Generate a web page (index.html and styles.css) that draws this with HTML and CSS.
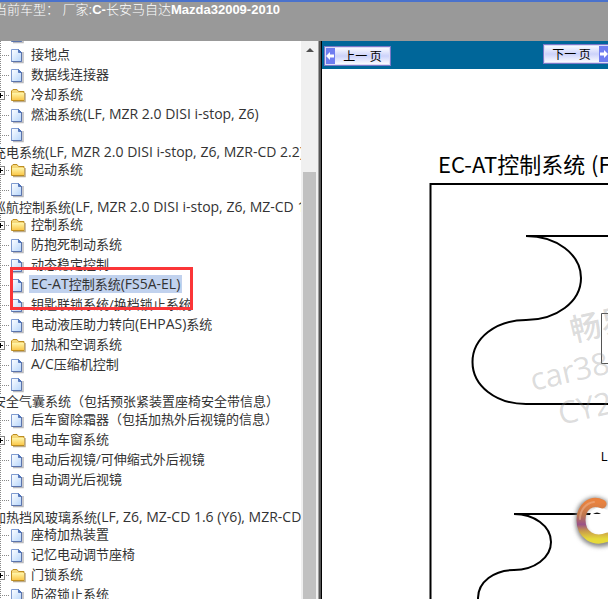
FILE: index.html
```
<!DOCTYPE html>
<html lang="zh-CN">
  <head>
    <meta charset="UTF-8" />
    <meta name="viewport" content="width=device-width, initial-scale=1.0" />
    <title>EC-AT控制系统</title>
    <link rel="stylesheet" href="styles.css">
  </head>
  <body>
    <svg class="defs" width="0" height="0" aria-hidden="true">
      <defs>
        <linearGradient id="paper" x1="0" y1="0" x2="1" y2="1">
          <stop offset="0" stop-color="#ffffff" />
          <stop offset="1" stop-color="#b5d5fb" />
        </linearGradient>
        <linearGradient id="gold" x1="0" y1="0" x2="0" y2="1">
          <stop offset="0" stop-color="#fff5a8" />
          <stop offset="1" stop-color="#fbc84b" />
        </linearGradient>
        <symbol id="page" viewBox="0 0 16 18">
          <path d="M3 16.5h10V6" fill="none" stroke="#b9b9bd" stroke-width="1.5" />
          <path d="M1.5 3.5h7l3 3v9h-10z" fill="url(#paper)" stroke="#7f9bd0" />
          <path d="M8.500 3.500v3h3z" fill="#5578bd" stroke="#5578bd" />
          <path d="M11.500 6v9.500H1.500" fill="none" stroke="#5b74ad" />
        </symbol>
        <symbol id="folder" viewBox="0 0 16 18">
          <path d="M3 15.500h12V7" fill="none" stroke="#b9a98a" stroke-width="1.500" />
          <path d="M1.500 14.500v-9.500l1.500-1.500h4l1.500 2h5.500v9z" fill="#f5d87a" stroke="#bd8d20" />
          <path d="M2 7h12v7H2z" fill="url(#gold)" />
        </symbol>
      </defs>
    </svg>

    <header class="header">
      <h1>当前车型： 厂家:<b>C-</b>长安马自达<b>Mazda32009-2010</b></h1>
    </header>

    <div class="frames">
      <nav class="tree">
        <ul>
          <li><svg class="icon"><use href="#page" /></svg></li>
          <li><svg class="icon"><use href="#page" /></svg><a href="#">接地点</a></li>
          <li><svg class="icon"><use href="#page" /></svg><a href="#">数据线连接器</a></li>
          <li class="parent"><button class="plus" aria-label="展开"></button><svg class="icon"><use href="#folder" /></svg><a href="#">冷却系统</a></li>
          <li><svg class="icon"><use href="#page" /></svg><a href="#">燃油系统<span class="en">(LF, MZR 2.0 DISI i-stop, Z6)</span></a></li>
          <li class="wrapped"><svg class="icon"><use href="#page" /></svg><a href="#">充电系统<span class="en">(LF, MZR 2.0 DISI i-stop, Z6, MZR-CD 2.2)</span></a></li>
          <li class="parent"><button class="plus" aria-label="展开"></button><svg class="icon"><use href="#folder" /></svg><a href="#">起动系统</a></li>
          <li class="wrapped"><svg class="icon"><use href="#page" /></svg><a href="#">巡航控制系统<span class="en">(LF, MZR 2.0 DISI i-stop, Z6, MZ-CD 1.6 (Y6))</span></a></li>
          <li class="parent"><button class="plus" aria-label="展开"></button><svg class="icon"><use href="#folder" /></svg><a href="#">控制系统</a></li>
          <li><svg class="icon"><use href="#page" /></svg><a href="#">防抱死制动系统</a></li>
          <li><svg class="icon"><use href="#page" /></svg><a href="#">动态稳定控制</a></li>
          <li class="marked"><svg class="icon"><use href="#page" /></svg><a href="#" class="selected"><span class="en">EC-AT</span>控制系统<span class="en">(FS5A-EL)</span></a></li>
          <li><svg class="icon"><use href="#page" /></svg><a href="#">钥匙联锁系统/换档锁止系统</a></li>
          <li><svg class="icon"><use href="#page" /></svg><a href="#">电动液压助力转向<span class="en">(EHPAS)</span>系统</a></li>
          <li class="parent"><button class="plus" aria-label="展开"></button><svg class="icon"><use href="#folder" /></svg><a href="#">加热和空调系统</a></li>
          <li><svg class="icon"><use href="#page" /></svg><a href="#"><span class="en">A/C</span>压缩机控制</a></li>
          <li class="wrapped"><svg class="icon"><use href="#page" /></svg><a href="#">安全气囊系统（包括预张紧装置座椅安全带信息）</a></li>
          <li><svg class="icon"><use href="#page" /></svg><a href="#">后车窗除霜器（包括加热外后视镜的信息）</a></li>
          <li class="parent"><button class="plus" aria-label="展开"></button><svg class="icon"><use href="#folder" /></svg><a href="#">电动车窗系统</a></li>
          <li><svg class="icon"><use href="#page" /></svg><a href="#">电动后视镜/可伸缩式外后视镜</a></li>
          <li><svg class="icon"><use href="#page" /></svg><a href="#">自动调光后视镜</a></li>
          <li class="wrapped"><svg class="icon"><use href="#page" /></svg><a href="#">加热挡风玻璃系统<span class="en">(LF, Z6, MZ-CD 1.6 (Y6), MZR-CD 2.2)</span></a></li>
          <li><svg class="icon"><use href="#page" /></svg><a href="#">座椅加热装置</a></li>
          <li><svg class="icon"><use href="#page" /></svg><a href="#">记忆电动调节座椅</a></li>
          <li class="parent"><button class="plus" aria-label="展开"></button><svg class="icon"><use href="#folder" /></svg><a href="#">门锁系统</a></li>
          <li><svg class="icon"><use href="#page" /></svg><a href="#">防盗锁止系统</a></li>
        </ul>
      </nav>

      <div class="scrollbar">
        <svg class="up" viewBox="0 0 8 4"><path d="M0 4l4-4 4 4z" fill="#505050" /></svg>
        <div class="thumb"></div>
      </div>

      <div class="divider"></div>

      <main class="content">
        <div class="toolbar">
          <button class="pager prev">
            <svg class="arrow" viewBox="0 0 10 18"><path d="M1 9l4-4v2.500h4v3H5V13z" fill="#fff" /></svg>
            <span>上一 页</span>
          </button>
          <button class="pager next">
            <span>下一 页</span>
            <svg class="arrow" viewBox="0 0 10 18"><path d="M9 9L5 5v2.500H1v3h4V13z" fill="#fff" /></svg>
          </button>
        </div>

        <svg class="diagram" width="600" height="600" viewBox="322 69 600 600">
          <defs>
            <linearGradient id="ring" x1="0" y1="0" x2="0" y2="1">
              <stop offset="0" stop-color="#e8823f" />
              <stop offset="0.350" stop-color="#bd7850" />
              <stop offset="0.600" stop-color="#9a5288" />
              <stop offset="0.780" stop-color="#c89a4c" />
              <stop offset="1" stop-color="#e6da3a" />
            </linearGradient>
            <filter id="soft" x="-30%" y="-30%" width="160%" height="160%">
              <feGaussianBlur stdDeviation="2" />
            </filter>
          </defs>
          <text class="title" x="438" y="173">EC-AT控制系统</text>
          <text class="title" x="591" y="173">(FS5A-EL)</text>
          <g class="lines">
            <path d="M922 184H430.500V700" />
            <path d="M526 236H922M526 236c30 0 55 18 55 42s-25 42-55 42c-30 0-53.500 18-53.500 42s23.500 42 53.500 42H922" />
            <path d="M514 514H922M514 514c20 0 37 12 37 28s-17 28-37 28c-20 0-36 12-36 28s16 28 36 28H922" />
          </g>
          <path d="M640 313.500H601.500V363.500H640" fill="none" stroke="#555" />
          <text class="note" x="601" y="461">L</text>
          <g class="watermark">
            <text transform="translate(573 342) rotate(-13)">畅易</text>
            <text transform="translate(533 391) rotate(-13)">car388</text>
            <text transform="translate(561 425) rotate(-13)">CY2</text>
          </g>
          <path d="M606 506c-12-9-26-3-26 14 0 20 16 26 30 20" fill="none" stroke="#888" stroke-width="9" filter="url(#soft)" />
          <path d="M601 507c-8 0-12 7-12 14 0 8 6 13 13 13h12v-20z" fill="#fff" />
          <path d="M602 504c-11-5-21 3-21 16 0 15 13 23 27 17" fill="none" stroke="url(#ring)" stroke-width="9" stroke-linecap="round" />
          <path d="M594 502c-8 1-14 8-14 17" fill="none" stroke="#efb795" stroke-width="2" stroke-linecap="round" opacity="0.500" />
          <path d="M593 514q4-3 8 0" fill="#111" />
        </svg>
      </main>
    </div>
  </body>
</html>
```
FILE: styles.css
```
* {
  box-sizing: border-box;
}

body {
  margin: 0;
  height: 100vh;
  display: flex;
  flex-direction: column;
  overflow: hidden;
  font-family: "Open Sans", "Noto Sans CJK SC", sans-serif;
  font-size: 13px;
  color: #333;
}

.defs {
  position: absolute;
}

.header {
  height: 41px;
  flex-shrink: 0;
  background: #999;
  border-top: 2px solid #4a72cc;
  overflow: hidden;
}

.header h1 {
  margin: 0 0 0 -6px;
  font-family: "Liberation Sans", "Noto Sans CJK SC", sans-serif;
  font-size: 13px;
  font-weight: 300;
  line-height: 15px;
  color: #fff;
  white-space: pre;
}

.header b {
  font-weight: 700;
}

.frames {
  flex: 1;
  display: flex;
  min-height: 0;
}

.tree {
  flex: 0 0 301px;
  overflow: hidden;
  background: #fff;
}

.tree ul {
  list-style: none;
  margin: -16px 0 0;
  padding: 0;
}

.tree li {
  display: flex;
  flex-wrap: wrap;
  align-items: center;
  height: 20px;
  padding-left: 10px;
  white-space: nowrap;
  background:
    repeating-linear-gradient(to bottom, #888 0 1px, transparent 1px 2px) 0 0 / 1px 20px no-repeat,
    repeating-linear-gradient(to right, #888 0 1px, transparent 1px 2px) 0 10px / 10px 1px no-repeat;
}

.tree li.parent {
  padding-left: 0;
}

.tree li.wrapped {
  height: 35px;
  align-content: flex-start;
}

.icon {
  width: 16px;
  height: 18px;
  margin: 1px 3px 1px 0;
  flex-shrink: 0;
}

.tree a {
  margin-bottom: 2px;
  padding: 0 2px;
  line-height: 18px;
  color: #333;
  text-decoration: none;
}

.tree .wrapped .icon {
  margin: 0 3px 1px 0;
}

.tree .wrapped a {
  flex: 0 0 120%;
  margin: 0 0 0 -19px;
  line-height: 15px;
}

.en {
  font-size: 14px;
}

.tree a.selected {
  background: #c1d2ee;
}

.marked {
  position: relative;
}

.marked::after {
  content: "";
  position: absolute;
  left: 10px;
  top: -8px;
  width: 177px;
  height: 37px;
  border: 3px solid #fb3538;
}

.plus {
  width: 9px;
  height: 9px;
  margin: 0 5px 0 -4px;
  padding: 0;
  border: 1px solid #848484;
  background:
    linear-gradient(#000, #000) center / 5px 1px no-repeat,
    linear-gradient(#000, #000) center / 1px 5px no-repeat,
    #fff;
}

.scrollbar {
  flex: 0 0 17px;
  display: flex;
  flex-direction: column;
  align-items: center;
  padding-top: 7px;
  background: #f0f0f0;
}

.up {
  width: 8px;
  height: 4px;
  margin-bottom: 120px;
}

.thumb {
  flex: 1;
  width: 13px;
  background: #c1c1c1;
}

.divider {
  flex: 0 0 4px;
  background: linear-gradient(to right, #a0a0a0 1px, #555 1px 3px, #000 3px);
}

.content {
  flex: 1;
  min-width: 0;
  overflow: hidden;
  background: #fff;
}

.toolbar {
  display: flex;
  justify-content: space-between;
  align-items: flex-start;
  height: 28px;
  margin-right: -2px;
  padding: 3px 0 0 2px;
  background: #069;
}

.pager {
  display: flex;
  align-items: stretch;
  width: 67px;
  height: 20px;
  padding: 0;
  border: 1px solid #7a78c8;
  outline: 1px solid #dcdcf4;
  outline-offset: -2px;
  background: linear-gradient(#fff, #ccd2fa 50%, #fff);
  font-family: "Noto Sans CJK SC", sans-serif;
  font-size: 12px;
  line-height: 17px;
  color: #000;
}

.pager span {
  flex: 1;
}

.prev {
  margin-top: 2px;
}

.arrow {
  width: 10px;
  height: 18px;
  background: #6f7df0;
}

.diagram {
  display: block;
}

.title {
  font-family: "Noto Sans CJK SC", sans-serif;
  font-size: 22px;
}

.note {
  font-family: "Liberation Sans", sans-serif;
  font-size: 12px;
}

.lines {
  fill: none;
  stroke: #000;
  stroke-width: 2;
}

.watermark {
  font-family: "Open Sans", "Noto Sans CJK SC", sans-serif;
  font-size: 31px;
  font-weight: 500;
  fill: #888;
  fill-opacity: 0.3;
}
```
